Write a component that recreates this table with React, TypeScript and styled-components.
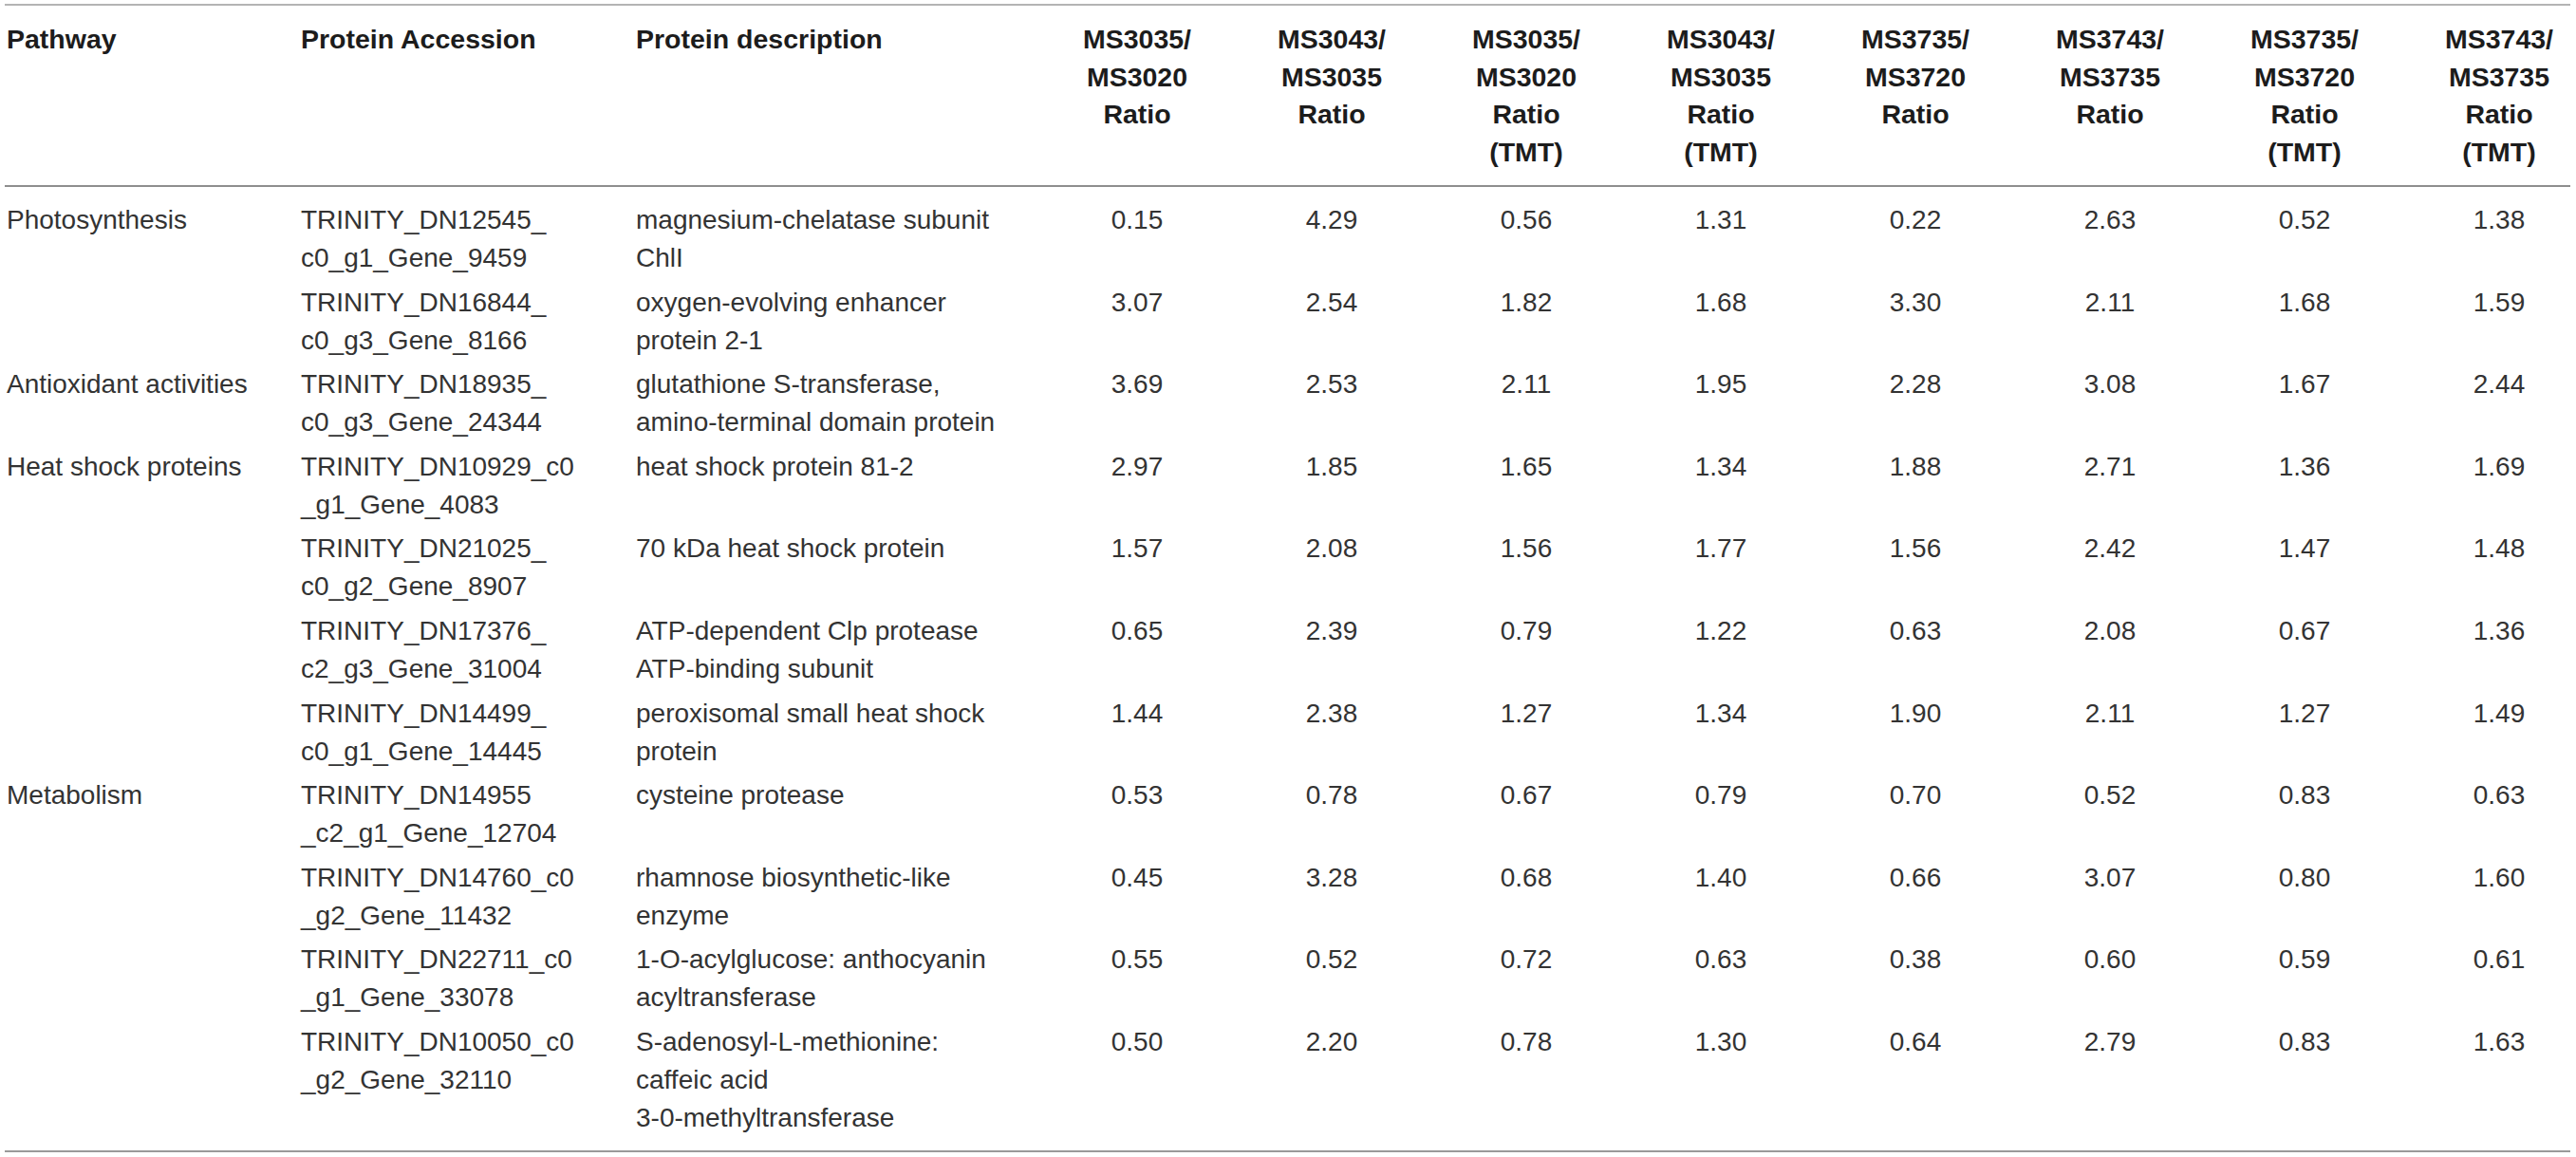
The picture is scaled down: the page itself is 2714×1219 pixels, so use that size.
import React from "react";
import styled, { createGlobalStyle } from "styled-components";

const GlobalStyle = createGlobalStyle`
  html, body {
    margin: 0;
    padding: 0;
    background: #ffffff;
  }
  body {
    font-family: "Liberation Sans", Arial, Helvetica, sans-serif;
  }
`;

const Page = styled.div`
  padding: 4px 0 0 5px;
  width: 2709px;
  box-sizing: border-box;
`;

const Table = styled.table`
  width: 2703px;
  table-layout: fixed;
  border-collapse: separate;
  border-spacing: 0;
  border-top: 2px solid #b4b4b4;
  border-bottom: 2px solid #9a9a9a;
  font-family: "Liberation Sans", Arial, Helvetica, sans-serif;
  font-size: 28px;
  color: #333333;
`;

const HeadCell = styled.th<{ $numeric?: boolean }>`
  padding: 16px 0 15px ${(p) => (p.$numeric ? "55px" : "2px")};
  text-align: ${(p) => (p.$numeric ? "center" : "left")};
  vertical-align: top;
  font-weight: 700;
  font-size: 28.5px;
  line-height: 39.5px;
  color: #1c1c1c;
  white-space: pre-line;
  border-bottom: 2px solid #8e8e8e;
`;

const Row = styled.tr`
  & > td {
    padding-top: 3.3px;
    padding-bottom: 3.3px;
  }
  &:first-child > td {
    padding-top: 15px;
  }
  &:last-child > td {
    padding-bottom: 14px;
  }
`;

const Cell = styled.td<{ $numeric?: boolean }>`
  padding-left: ${(p) => (p.$numeric ? "55px" : "2px")};
  padding-right: 0;
  text-align: ${(p) => (p.$numeric ? "center" : "left")};
  vertical-align: top;
  line-height: 40px;
  white-space: pre-line;
`;

const Col = styled.col<{ $w: number }>`
  width: ${(p) => p.$w}px;
`;

type DataRow = {
  pathway: string;
  accession: string;
  description: string;
  values: string[];
};

const headers = [
  "MS3035/\nMS3020\nRatio",
  "MS3043/\nMS3035\nRatio",
  "MS3035/\nMS3020\nRatio\n(TMT)",
  "MS3043/\nMS3035\nRatio\n(TMT)",
  "MS3735/\nMS3720\nRatio",
  "MS3743/\nMS3735\nRatio",
  "MS3735/\nMS3720\nRatio\n(TMT)",
  "MS3743/\nMS3735\nRatio\n(TMT)",
];

const rows: DataRow[] = [
  {
    pathway: "Photosynthesis",
    accession: "TRINITY_DN12545_\nc0_g1_Gene_9459",
    description: "magnesium-chelatase subunit\nChlI",
    values: ["0.15", "4.29", "0.56", "1.31", "0.22", "2.63", "0.52", "1.38"],
  },
  {
    pathway: "",
    accession: "TRINITY_DN16844_\nc0_g3_Gene_8166",
    description: "oxygen-evolving enhancer\nprotein 2-1",
    values: ["3.07", "2.54", "1.82", "1.68", "3.30", "2.11", "1.68", "1.59"],
  },
  {
    pathway: "Antioxidant activities",
    accession: "TRINITY_DN18935_\nc0_g3_Gene_24344",
    description: "glutathione S-transferase,\namino-terminal domain protein",
    values: ["3.69", "2.53", "2.11", "1.95", "2.28", "3.08", "1.67", "2.44"],
  },
  {
    pathway: "Heat shock proteins",
    accession: "TRINITY_DN10929_c0\n_g1_Gene_4083",
    description: "heat shock protein 81-2",
    values: ["2.97", "1.85", "1.65", "1.34", "1.88", "2.71", "1.36", "1.69"],
  },
  {
    pathway: "",
    accession: "TRINITY_DN21025_\nc0_g2_Gene_8907",
    description: "70 kDa heat shock protein",
    values: ["1.57", "2.08", "1.56", "1.77", "1.56", "2.42", "1.47", "1.48"],
  },
  {
    pathway: "",
    accession: "TRINITY_DN17376_\nc2_g3_Gene_31004",
    description: "ATP-dependent Clp protease\nATP-binding subunit",
    values: ["0.65", "2.39", "0.79", "1.22", "0.63", "2.08", "0.67", "1.36"],
  },
  {
    pathway: "",
    accession: "TRINITY_DN14499_\nc0_g1_Gene_14445",
    description: "peroxisomal small heat shock\nprotein",
    values: ["1.44", "2.38", "1.27", "1.34", "1.90", "2.11", "1.27", "1.49"],
  },
  {
    pathway: "Metabolism",
    accession: "TRINITY_DN14955\n_c2_g1_Gene_12704",
    description: "cysteine protease",
    values: ["0.53", "0.78", "0.67", "0.79", "0.70", "0.52", "0.83", "0.63"],
  },
  {
    pathway: "",
    accession: "TRINITY_DN14760_c0\n_g2_Gene_11432",
    description: "rhamnose biosynthetic-like\nenzyme",
    values: ["0.45", "3.28", "0.68", "1.40", "0.66", "3.07", "0.80", "1.60"],
  },
  {
    pathway: "",
    accession: "TRINITY_DN22711_c0\n_g1_Gene_33078",
    description: "1-O-acylglucose: anthocyanin\nacyltransferase",
    values: ["0.55", "0.52", "0.72", "0.63", "0.38", "0.60", "0.59", "0.61"],
  },
  {
    pathway: "",
    accession: "TRINITY_DN10050_c0\n_g2_Gene_32110",
    description: "S-adenosyl-L-methionine:\ncaffeic acid\n3-0-methyltransferase",
    values: ["0.50", "2.20", "0.78", "1.30", "0.64", "2.79", "0.83", "1.63"],
  },
];

export default function App() {
  return (
    <>
      <GlobalStyle />
      <Page>
        <Table>
          <colgroup>
            <Col $w={310} />
            <Col $w={353} />
            <Col $w={400} />
            {headers.map((_, i) => (
              <Col key={i} $w={205} />
            ))}
          </colgroup>
          <thead>
            <tr>
              <HeadCell>Pathway</HeadCell>
              <HeadCell>Protein Accession</HeadCell>
              <HeadCell>Protein description</HeadCell>
              {headers.map((h, i) => (
                <HeadCell key={i} $numeric>
                  {h}
                </HeadCell>
              ))}
            </tr>
          </thead>
          <tbody>
            {rows.map((r, i) => (
              <Row key={i}>
                <Cell>{r.pathway}</Cell>
                <Cell>{r.accession}</Cell>
                <Cell>{r.description}</Cell>
                {r.values.map((v, j) => (
                  <Cell key={j} $numeric>
                    {v}
                  </Cell>
                ))}
              </Row>
            ))}
          </tbody>
        </Table>
      </Page>
    </>
  );
}
